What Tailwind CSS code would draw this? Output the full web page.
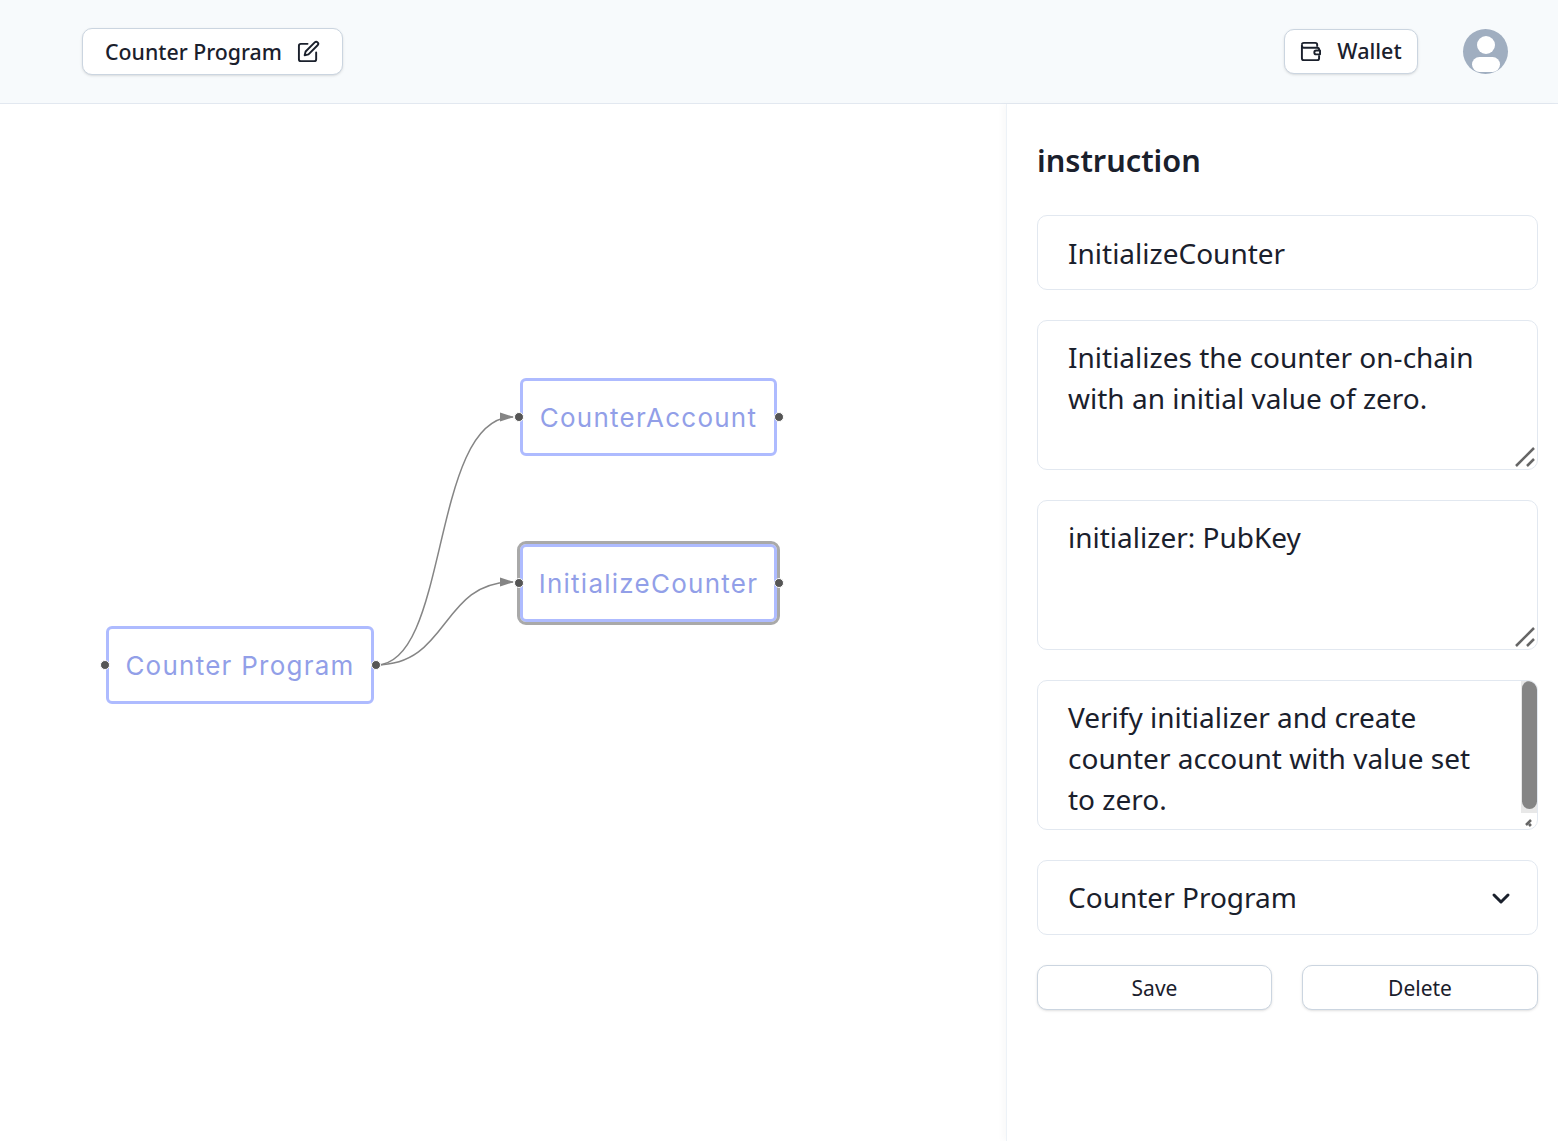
<!DOCTYPE html>
<html lang="en">
  <head>
    <meta charset="UTF-8" />
    <meta name="viewport" content="width=device-width, initial-scale=1.0" />
    <title>Counter Program</title>
    <script src="https://cdn.jsdelivr.net/npm/@tailwindcss/browser@4"></script>
  </head>
  <body class="bg-white h-[1141px] overflow-hidden flex flex-col font-['Noto_Sans',sans-serif] text-[#1a202c]">
    <!-- Header -->
    <header class="h-[104px] shrink-0 bg-[#f7fafc] border-b border-[#e2e8f0] flex items-center justify-between pl-[82px] pr-[50px]">
      <button class="w-[261px] h-[47px] bg-white border border-[#cbd5e0] rounded-[10px] shadow-sm flex items-center justify-center gap-[15px] text-[21.300px] font-medium">
        <span>Counter Program</span>
        <svg class="w-[23px] h-[23px]" viewBox="0 0 24 24" fill="none" stroke="currentColor" stroke-width="2" stroke-linecap="round" stroke-linejoin="round">
          <path d="M11 4H4a2 2 0 0 0-2 2v14a2 2 0 0 0 2 2h14a2 2 0 0 0 2-2v-7" />
          <path d="M18.5 2.5a2.121 2.121 0 0 1 3 3L12 15l-4 1 1-4 9.5-9.5z" />
        </svg>
      </button>
      <div class="flex items-center gap-[45px]">
        <button class="w-[134px] h-[45px] bg-white border border-[#cbd5e0] rounded-[10px] shadow-sm flex items-center justify-center gap-[16px] text-[21.500px] font-medium">
          <svg class="w-[21px] h-[21px]" viewBox="0 0 22 22" fill="none" stroke="currentColor" stroke-width="2" stroke-linejoin="round">
            <path d="M18 6V4a2 2 0 0 0-2-2H4a2 2 0 0 0-2 2" />
            <path d="M2 4v14a2 2 0 0 0 2 2h14a2 2 0 0 0 2-2v-3" />
            <path d="M2 5a2 2 0 0 0 2 2h14a2 2 0 0 1 2 2v1" />
            <path d="M21 10h-4a1.500 1.500 0 0 0 0 4h4z" />
          </svg>
          <span>Wallet</span>
        </button>
        <div class="w-[45px] h-[45px] rounded-full bg-[#a0aec0] overflow-hidden flex flex-col items-center">
          <div class="w-[18px] h-[18px] mt-[7px] rounded-full bg-white"></div>
          <div class="w-[28px] h-[15px] mt-[3px] rounded-full bg-white"></div>
        </div>
      </div>
    </header>

    <div class="flex flex-1 min-h-0">
      <!-- Flow canvas -->
      <main class="relative w-[1006px] shrink-0">
        <svg class="absolute inset-0 w-full h-full" viewBox="0 0 1006 1037" fill="none">
          <path d="M376 561 C 450 561, 430 313, 513 313" stroke="#858585" stroke-width="1.500" />
          <path d="M376 561 C 450 561, 440 478, 513 478" stroke="#858585" stroke-width="1.500" />
          <path d="M500 308.500 L514 313 L500 317.500 Z" fill="#858585" />
          <path d="M500 473.500 L514 478 L500 482.500 Z" fill="#858585" />
        </svg>

        <div class="absolute left-[106px] top-[522px] w-[268px] h-[78px] pt-[1px] bg-white border-[3px] border-[#aebbff] rounded-[6px] flex items-center justify-center text-[26px] tracking-[1.250px] text-[#929fe8] font-['Inter',sans-serif]">
          Counter Program
          <span class="absolute -left-[9.500px] top-1/2 -translate-y-1/2 w-[10px] h-[10px] rounded-full bg-[#555] border border-white"></span>
          <span class="absolute -right-[9.500px] top-1/2 -translate-y-1/2 w-[10px] h-[10px] rounded-full bg-[#555] border border-white"></span>
        </div>

        <div class="absolute left-[520px] top-[274px] w-[257px] h-[78px] bg-white border-[3px] border-[#aebbff] rounded-[6px] flex items-center justify-center text-[26px] tracking-[1.250px] text-[#929fe8] font-['Inter',sans-serif]">
          CounterAccount
          <span class="absolute -left-[9.500px] top-1/2 -translate-y-1/2 w-[10px] h-[10px] rounded-full bg-[#555] border border-white"></span>
          <span class="absolute -right-[9.500px] top-1/2 -translate-y-1/2 w-[10px] h-[10px] rounded-full bg-[#555] border border-white"></span>
        </div>

        <div class="absolute left-[520px] top-[440px] w-[257px] h-[78px] bg-white border-[3px] border-[#aebbff] rounded-[6px] outline-[3px] outline-[#a9a9a9] flex items-center justify-center text-[26px] tracking-[1.250px] text-[#929fe8] font-['Inter',sans-serif]">
          InitializeCounter
          <span class="absolute -left-[9.500px] top-1/2 -translate-y-1/2 w-[10px] h-[10px] rounded-full bg-[#555] border border-white"></span>
          <span class="absolute -right-[9.500px] top-1/2 -translate-y-1/2 w-[10px] h-[10px] rounded-full bg-[#555] border border-white"></span>
        </div>
      </main>

      <!-- Side panel -->
      <aside class="flex-1 border-l border-[#edf2f7] shadow-[-4px_0_6px_rgba(0,0,0,0.025)] pl-[30px] pr-[20px] pt-[34px] flex flex-col">
        <h2 class="text-[30.700px] leading-[45px] font-semibold mb-[32px]">instruction</h2>
        <div class="flex flex-col gap-[30px] text-[28px] leading-[41px] text-[#1a202c]">
          <div class="h-[75px] border border-[#e2e8f0] rounded-[10px] pl-[30px] pt-[1px] flex items-center">InitializeCounter</div>
          <div class="relative h-[150px] border border-[#e2e8f0] rounded-[10px] pl-[30px] pr-[40px] pt-[16px]">
            Initializes the counter on-chain with an initial value of zero.
            <svg class="absolute right-0 bottom-0 w-[24px] h-[24px]" viewBox="0 0 24 24" stroke="#666" stroke-width="2.500" fill="none">
              <path d="M3 21 L21 3 M14 21 L21 14" />
            </svg>
          </div>
          <div class="relative h-[150px] border border-[#e2e8f0] rounded-[10px] pl-[30px] pr-[40px] pt-[16px]">
            initializer: PubKey
            <svg class="absolute right-0 bottom-0 w-[24px] h-[24px]" viewBox="0 0 24 24" stroke="#666" stroke-width="2.500" fill="none">
              <path d="M3 21 L21 3 M14 21 L21 14" />
            </svg>
          </div>
          <div class="relative h-[150px] border border-[#e2e8f0] rounded-[10px] pl-[30px] pr-[50px] pt-[16px] overflow-hidden">
            Verify initializer and create counter account with value set to zero.
            <div class="absolute right-0 top-0 bottom-[16px] w-[16px] bg-[#e8e8e8]">
              <div class="w-[15px] h-[128px] ml-[1px] rounded-full bg-[#858585]"></div>
            </div>
            <svg class="absolute right-[1px] bottom-0 w-[15px] h-[15px]" viewBox="0 0 15 15" stroke="#666" stroke-width="2.500" fill="none">
              <path d="M5 11 L10 6 M8 12 L10 10" />
            </svg>
          </div>
          <div class="h-[75px] border border-[#e2e8f0] rounded-[10px] pl-[30px] pr-[24px] flex items-center justify-between">
            <span>Counter Program</span>
            <svg class="w-[24px] h-[24px]" viewBox="0 0 24 24" fill="none" stroke="#1a202c" stroke-width="3" stroke-linecap="round" stroke-linejoin="round">
              <path d="M5 9 L12 16 L19 9" />
            </svg>
          </div>
          <div class="flex justify-between text-[21px] font-normal">
            <button class="w-[235px] h-[45px] pt-[2px] bg-white border border-[#cbd5e0] rounded-[10px] shadow-sm">Save</button>
            <button class="w-[236px] h-[45px] pt-[2px] bg-white border border-[#cbd5e0] rounded-[10px] shadow-sm">Delete</button>
          </div>
        </div>
      </aside>
    </div>
  </body>
</html>
